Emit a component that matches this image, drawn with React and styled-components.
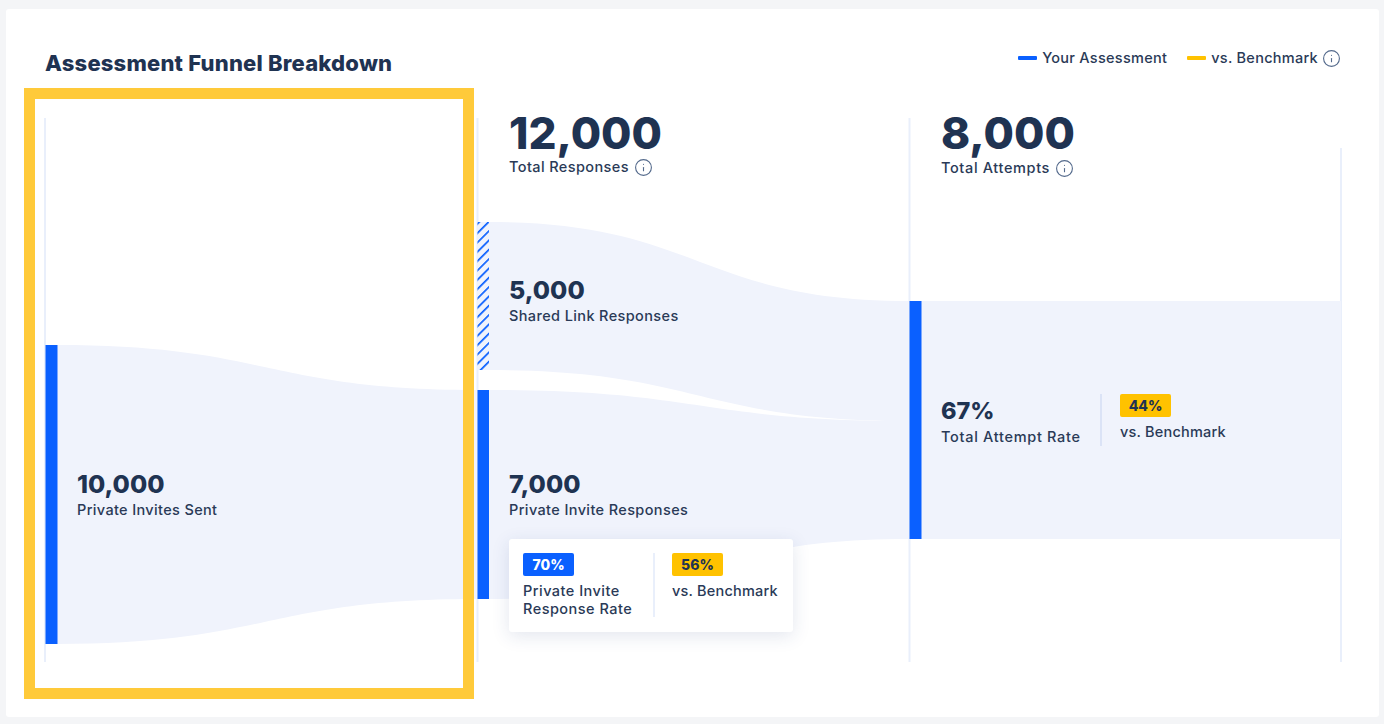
import React from "react";
import styled, { createGlobalStyle } from "styled-components";
import { Info } from "lucide-react";

const GlobalStyle = createGlobalStyle`
  body {
    margin: 0;
    background: #f4f5f7;
    font-family: Inter, "Liberation Sans", sans-serif;
    color: #1f3352;
  }
`;

const Page = styled.div`
  width: 1384px;
  height: 724px;
  box-sizing: border-box;
  padding: 9px 5px 7px 6px;
`;

const Card = styled.div`
  position: relative;
  height: 100%;
  box-sizing: border-box;
  padding: 40px 35px 0 38px;
  background: #fff;
  border-radius: 3px;
`;

const Header = styled.div`
  display: flex;
  justify-content: space-between;
  align-items: flex-start;
  height: 51px;
  padding: 0 3px 0 1px;
`;

const Title = styled.h2`
  margin: 0;
  font-size: 22px;
  line-height: 28px;
  font-weight: 800;
  letter-spacing: 0.2px;
  color: #1f3352;
`;

const Legend = styled.div`
  display: flex;
  align-items: center;
  height: 18px;
`;

const Swatch = styled.span`
  width: 19px;
  height: 4px;
  margin-right: 5px;
  border-radius: 1px;
  background: ${(p) => p.$color};
`;

const LegendText = styled.span`
  margin-right: ${(p) => p.$gap}px;
  font-size: 14.5px;
  line-height: 18px;
  font-weight: 450;
  letter-spacing: 0.28px;
  color: #2a3a57;
`;

const InfoIcon = styled(Info).attrs({ size: 19, strokeWidth: 1.4 })`
  color: #546a8c;
  flex: none;
`;

const Chart = styled.div`
  position: relative;
  width: 1300px;
  height: 570px;
`;

const Funnel = styled.svg`
  position: absolute;
  inset: 0;
`;

const Columns = styled.div`
  position: relative;
  display: grid;
  grid-template-columns: repeat(3, 432px);
  padding: 0 0 0 1px;
`;

const Column = styled.div`
  display: flex;
  flex-direction: column;
  align-items: flex-start;
  padding: 11px 0 0 32px;
`;

const BigNumber = styled.div`
  font-size: 44px;
  line-height: 44px;
  font-weight: 800;
  color: #1f3352;
`;

const TotalLabel = styled.div`
  display: flex;
  align-items: center;
  gap: 5px;
  margin-top: ${(p) => p.$top}px;
  font-size: 14.5px;
  line-height: 20px;
  font-weight: 450;
  letter-spacing: ${(p) => p.$spacing}px;
  color: #2a3a57;
`;

const Stat = styled.div`
  margin-top: ${(p) => p.$top}px;
`;

const Number = styled.div`
  font-size: 25px;
  line-height: 26px;
  font-weight: 800;
  color: #1f3352;
`;

const Label = styled.div`
  margin-top: 3px;
  font-size: 14.5px;
  line-height: 20px;
  font-weight: 450;
  letter-spacing: ${(p) => p.$spacing || 0.38}px;
  color: #2a3a57;
`;

const Popup = styled.div`
  display: flex;
  width: 284px;
  height: 93px;
  box-sizing: border-box;
  margin-top: 19px;
  padding: 14px;
  background: #fff;
  border-radius: 3px;
  box-shadow: 0 4px 18px rgba(40, 60, 120, 0.13);
`;

const RateRow = styled.div`
  display: flex;
  margin-top: 216px;
`;

const RateStat = styled.div`
  width: 159px;
  padding-top: 4px;
`;

const RateNumber = styled.div`
  font-size: 23.5px;
  line-height: 26px;
  font-weight: 800;
  color: #1f3352;
`;

const Divider = styled.div`
  width: 2px;
  height: ${(p) => p.$height}px;
  margin-right: ${(p) => p.$gap}px;
  background: ${(p) => p.$color};
`;

const PopupCell = styled.div`
  width: ${(p) => p.$width}px;
`;

const Badge = styled.div`
  width: 51px;
  height: 23px;
  border-radius: 2px;
  background: ${(p) => (p.$blue ? "#0a60ff" : "#ffc200")};
  color: ${(p) => (p.$blue ? "#fff" : "#1f3352")};
  font-size: 14px;
  line-height: 24px;
  font-weight: 800;
  text-align: center;
`;

const BadgeText = styled.div`
  margin-top: 6px;
  font-size: 14.5px;
  line-height: 18px;
  font-weight: 450;
  letter-spacing: ${(p) => p.$spacing}px;
  color: #2a3a57;
  white-space: nowrap;
`;

const HighlightFrame = styled.div`
  position: absolute;
  left: 18px;
  top: 79px;
  width: 450px;
  height: 611px;
  box-sizing: border-box;
  border: 11px solid #ffca3a;
  pointer-events: none;
`;

function FunnelDrawing() {
  // coordinates are page pixels, the viewBox starts where the chart starts
  return (
    <Funnel width="1300" height="570" viewBox="44 100 1300 570">
      <defs>
        <pattern
          id="hatch"
          width="6.6"
          height="6.6"
          patternUnits="userSpaceOnUse"
          patternTransform="rotate(45)"
        >
          <rect width="6.6" height="6.6" fill="#f0f3fc" />
          <rect width="1.7" height="6.6" fill="#0a60ff" />
        </pattern>
      </defs>
      <g fill="#e9effb">
        <rect x="44" y="118" width="2" height="544" />
        <rect x="476.5" y="118" width="2" height="544" />
        <rect x="908.5" y="118" width="2" height="544" />
        <rect x="1340" y="148" width="2" height="514" />
      </g>
      <g fill="#f0f3fc">
        <path d="M57 345 C267 345 267 390 477 390 L477 599 C267 599 267 644 57 644 Z" />
        <path d="M489 222 C699 222 699 301 909 301 L909 421 C699 421 699 370 489 370 Z" />
        <path d="M489 390 C699 390 699 421 909 421 L909 539 C699 539 699 599 489 599 Z" />
        <rect x="921" y="301" width="420" height="238" />
      </g>
      <g fill="#0a60ff">
        <rect x="45.5" y="345" width="12" height="299" />
        <rect x="477.5" y="390" width="11.5" height="209" />
        <rect x="909.5" y="301" width="12" height="238" />
      </g>
      <rect x="477.5" y="222" width="11.5" height="148" fill="url(#hatch)" />
    </Funnel>
  );
}

function App() {
  return (
    <Page>
      <GlobalStyle />
      <Card>
        <Header>
          <Title>Assessment Funnel Breakdown</Title>
          <Legend>
            <Swatch $color="#0a60ff" />
            <LegendText $gap={20}>Your Assessment</LegendText>
            <Swatch $color="#ffc200" />
            <LegendText $gap={4}>vs. Benchmark</LegendText>
            <InfoIcon />
          </Legend>
        </Header>
        <Chart>
          <FunnelDrawing />
          <Columns>
            <Column>
              <Stat $top={360}>
                <Number>10,000</Number>
                <Label $spacing={0.35}>Private Invites Sent</Label>
              </Stat>
            </Column>
            <Column>
              <BigNumber>12,000</BigNumber>
              <TotalLabel $top={2} $spacing={0.4}>
                Total Responses <InfoIcon />
              </TotalLabel>
              <Stat $top={100}>
                <Number>5,000</Number>
                <Label>Shared Link Responses</Label>
              </Stat>
              <Stat $top={145}>
                <Number>7,000</Number>
                <Label>Private Invite Responses</Label>
              </Stat>
              <Popup>
                <PopupCell $width={130}>
                  <Badge $blue>70%</Badge>
                  <BadgeText $spacing={0.47}>
                    Private Invite
                    <br />
                    Response Rate
                  </BadgeText>
                </PopupCell>
                <Divider $height={64} $gap={17} $color="#e9effb" />
                <PopupCell $width={107}>
                  <Badge>56%</Badge>
                  <BadgeText $spacing={0.2}>vs. Benchmark</BadgeText>
                </PopupCell>
              </Popup>
            </Column>
            <Column>
              <BigNumber>8,000</BigNumber>
              <TotalLabel $top={3} $spacing={0.64}>
                Total Attempts <InfoIcon />
              </TotalLabel>
              <RateRow>
                <RateStat>
                  <RateNumber>67%</RateNumber>
                  <Label $spacing={0.7}>Total Attempt Rate</Label>
                </RateStat>
                <Divider $height={52} $gap={18} $color="#dbe3f6" />
                <PopupCell $width={110}>
                  <Badge>44%</Badge>
                  <BadgeText $spacing={0.2}>vs. Benchmark</BadgeText>
                </PopupCell>
              </RateRow>
            </Column>
          </Columns>
        </Chart>
        <HighlightFrame />
      </Card>
    </Page>
  );
}

export default App;
